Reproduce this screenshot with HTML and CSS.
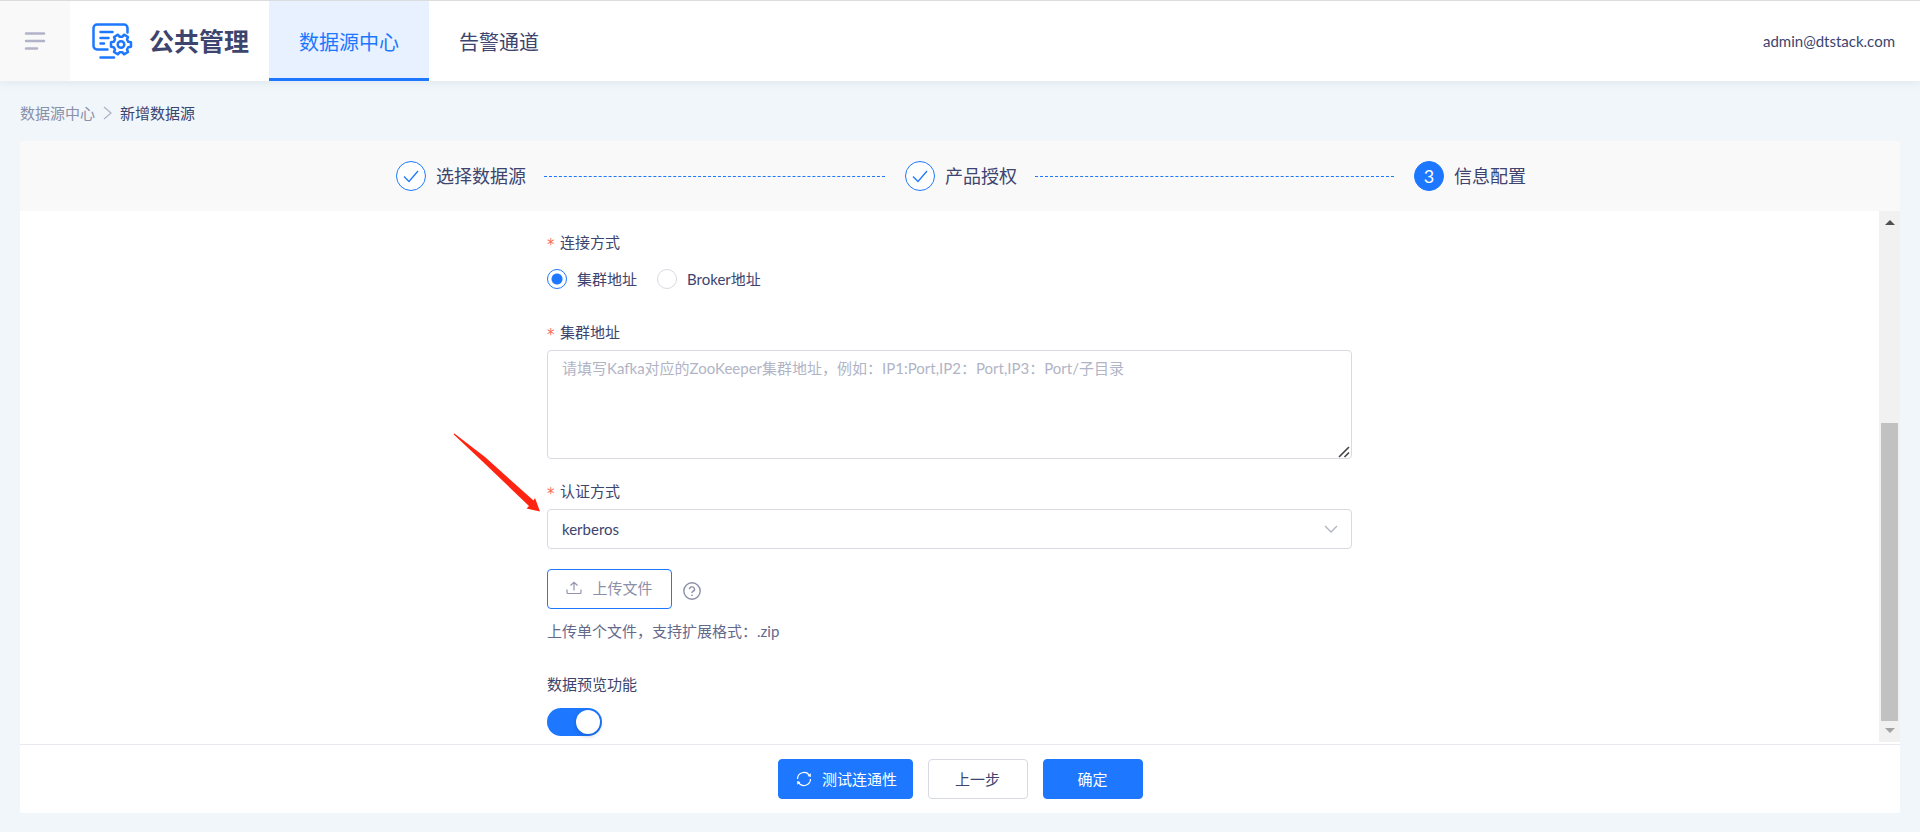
FILE: index.html
```
<!DOCTYPE html>
<html lang="zh-CN">
<head>
<meta charset="utf-8">
<title>公共管理 - 新增数据源</title>
<link rel="stylesheet" href="styles.css">
</head>
<body>
<header class="topbar">
  <button class="menu-toggle" type="button" aria-label="菜单">
    <svg width="22" height="18" viewBox="0 0 22 18" fill="none" stroke="#b1b4c9" stroke-width="2.5" stroke-linecap="round"><path d="M2 1.5h18M2 9h18M2 16.500h11"/></svg>
  </button>
  <div class="brand">
    <svg class="brand-icon" width="42" height="38" viewBox="0 0 42 38" fill="none" stroke="#1d78ff" stroke-width="2.5" stroke-linecap="round" stroke-linejoin="round">
      <path d="M36.500 10.500V6a3.500 3.500 0 0 0-3.500-3.500H6A3.500 3.500 0 0 0 2.500 6v18A3.500 3.500 0 0 0 6 27.500h10.500"/>
      <path d="M9.500 10h12M9.500 16h8M9.500 21.500h3.500M9.500 35.500h13.500"/>
      <g transform="translate(30 22.500)">
        <path d="M7.300-2.700 10-2.300v4.600L7.300 2.700 6 5l1 2.500-4 2.300-1.600-2.100h-2.800L-3 9.800l-4-2.300L-6 5-7.300 2.700-10 2.300v-4.600l2.700-.4L-6-5l-1-2.500 4-2.300 1.600 2.100h2.800L3-9.800l4 2.300L6-5z"/>
        <circle r="3.300"/>
      </g>
    </svg>
    <span class="brand-name">公共管理</span>
  </div>
  <nav class="tabs">
    <a class="tab tab-active" href="#source">数据源中心</a>
    <a class="tab" href="#alarm">告警通道</a>
  </nav>
  <span class="user">admin@dtstack.com</span>
</header>

<nav class="breadcrumb" aria-label="面包屑">
  <a class="crumb" href="#source">数据源中心</a>
  <svg width="9" height="14" viewBox="0 0 9 14" fill="none" stroke="#b1b4c5" stroke-width="1.300"><path d="M1 1l7 6-7 6"/></svg>
  <span class="crumb-current">新增数据源</span>
</nav>

<main class="panel">
  <ol class="steps">
    <li class="step">
      <span class="step-dot"><svg width="16" height="14" viewBox="0 0 16 14" fill="none" stroke="#1d78ff" stroke-width="1.300"><path d="M1 7.500l5 5L15 2"/></svg></span>
      <span class="step-title">选择数据源</span>
      <span class="step-line"></span>
    </li>
    <li class="step">
      <span class="step-dot"><svg width="16" height="14" viewBox="0 0 16 14" fill="none" stroke="#1d78ff" stroke-width="1.300"><path d="M1 7.500l5 5L15 2"/></svg></span>
      <span class="step-title">产品授权</span>
      <span class="step-line"></span>
    </li>
    <li class="step" aria-current="step">
      <span class="step-dot step-dot-current">3</span>
      <span class="step-title">信息配置</span>
    </li>
  </ol>

  <div class="content">
    <div class="scroll">
      <form class="form" id="config">
        <fieldset class="field">
          <legend class="label required">连接方式</legend>
          <div class="radios">
            <label class="radio"><input type="radio" name="mode" checked>集群地址</label>
            <label class="radio"><input type="radio" name="mode">Broker地址</label>
          </div>
        </fieldset>
        <div class="field">
          <label class="label required" for="address">集群地址</label>
          <div class="control-wrap">
            <textarea class="control textarea" id="address" placeholder="请填写Kafka对应的ZooKeeper集群地址，例如：IP1:Port,IP2：Port,IP3：Port/子目录"></textarea>
            <svg class="grip" width="12" height="12" viewBox="0 0 12 12" fill="none" stroke="#444" stroke-width="1.600"><path d="M1 11 11 1M6.500 11 11 6.500"/></svg>
          </div>
        </div>
        <div class="field field-auth">
          <label class="label required" for="auth">认证方式</label>
          <div class="control-wrap">
            <select class="control select" id="auth"><option>kerberos</option></select>
            <svg class="select-arrow" width="14" height="8" viewBox="0 0 14 8" fill="none" stroke="#b1b4c5" stroke-width="1.300"><path d="M1 1l6 6 6-6"/></svg>
          </div>
          <svg class="pointer" width="88" height="80" viewBox="0 0 88 80" fill="#ff2312"><path d="M.5 1.200 1.400.500 32 24 80.500 67.500 82 65 87 78.500 73.500 75.500 76 73 29 28z"/></svg>
        </div>
        <div class="field">
          <div class="upload-row">
            <button class="btn upload" type="button">
              <svg width="16" height="14" viewBox="0 0 16 14" fill="none" stroke="#9194ad" stroke-width="1.200"><path d="M1 8.500v3a1 1 0 0 0 1 1h12a1 1 0 0 0 1-1v-3M8 9.500V1.500M4.500 4.500 8 1.200l3.500 3.300"/></svg>
              上传文件
            </button>
            <svg class="help" width="18" height="18" viewBox="0 0 18 18" fill="none" stroke="#8b8fa8" stroke-width="1.400"><circle cx="9" cy="9" r="8.200"/><path d="M6.500 7.200a2.500 2.300 0 1 1 3.700 2c-.8.5-1.200.8-1.200 1.800M9 12.400v1.500"/></svg>
          </div>
          <p class="hint">上传单个文件，支持扩展格式：.zip</p>
        </div>
        <div class="field field-switch">
          <label class="label" for="preview">数据预览功能</label>
          <input class="switch" id="preview" type="checkbox" role="switch" checked>
        </div>
      </form>
    </div>
    <div class="scrollbar" aria-hidden="true">
      <span class="scroll-arrow scroll-up"></span>
      <span class="scroll-thumb"></span>
      <span class="scroll-arrow scroll-down"></span>
    </div>
  </div>

  <footer class="actions">
    <button class="btn btn-primary btn-test" type="button">
      <svg width="16" height="16" viewBox="0 0 16 16" fill="none" stroke="#fff" stroke-width="1.200"><path d="M1.500 8A6.500 6.500 0 0 1 13.500 4.500M14.500 8A6.500 6.500 0 0 1 2.500 11.500"/><path fill="#fff" stroke="none" d="M14.800 2.300v3.800l-3.300-1zM1.200 13.700V9.900l3.300 1z"/></svg>
      测试连通性
    </button>
    <button class="btn" type="button">上一步</button>
    <button class="btn btn-primary" type="submit" form="config">确定</button>
  </footer>
</main>
</body>
</html>
```

FILE: styles.css
```
* {
  box-sizing: border-box;
}

body {
  margin: 0;
  height: 100vh;
  padding-bottom: 19px;
  display: flex;
  flex-direction: column;
  background: #f0f6fa;
  color: #3d446e;
  font-family: Lato, "Noto Sans CJK SC", sans-serif;
  font-size: 15px;
  line-height: 24px;
}

a {
  color: inherit;
  text-decoration: none;
}

button,
select,
textarea {
  font: inherit;
  color: inherit;
}

svg {
  flex: none;
}

.topbar {
  flex: none;
  display: flex;
  height: 81px;
  border-top: 1px solid #dcdcdc;
  background: #fff;
  box-shadow: 0 2px 8px rgba(60, 90, 120, 0.08);
}

.menu-toggle {
  display: flex;
  align-items: center;
  justify-content: center;
  width: 70px;
  padding: 0;
  border: 0;
  background: #f9f9f9;
}

.brand {
  display: flex;
  align-items: center;
  gap: 16px;
  padding: 0 20px 0 21px;
}

.brand-name {
  font-size: 25px;
  font-weight: 700;
}

.tabs {
  display: flex;
}

.tab {
  display: flex;
  align-items: center;
  padding: 2px 30px 0;
  font-size: 20px;
}

.tab-active {
  background: #e8f1ff;
  box-shadow: inset 0 -3px #1d78ff;
  color: #1d78ff;
}

.user {
  margin: auto 25px auto auto;
}

.breadcrumb {
  flex: none;
  display: flex;
  align-items: center;
  gap: 8px;
  height: 60px;
  padding: 4px 20px 0;
}

.crumb {
  color: #8b8fa8;
}

.panel {
  flex: 1;
  min-height: 0;
  display: flex;
  flex-direction: column;
  margin: 0 20px;
  background: #fff;
  border-radius: 2px;
}

.steps {
  flex: none;
  display: flex;
  gap: 20px;
  height: 70px;
  margin: 0;
  padding: 0 calc(20% - 2px) 0 20%;
  list-style: none;
  background: #f9f9f9;
  font-size: 18px;
}

.step {
  flex: 1;
  display: flex;
  align-items: center;
}

.step:last-child {
  flex: none;
}

.step-dot {
  display: flex;
  align-items: center;
  justify-content: center;
  width: 30px;
  height: 30px;
  margin-right: 10px;
  border: 1px solid #1d78ff;
  border-radius: 50%;
  background: #fff;
}

.step-dot-current {
  background: #1d78ff;
  color: #fff;
}

.step-line {
  flex: 1;
  margin-left: 18px;
  border-top: 1px dashed #1d78ff;
}

.content {
  flex: 1;
  min-height: 0;
  display: flex;
  padding-bottom: 2px;
}

.scroll {
  flex: 1;
  overflow: hidden;
}

.form {
  display: flex;
  flex-direction: column;
  gap: 20px;
  max-width: 805px;
  margin: 0 auto;
  padding-top: 19px;
}

.field {
  min-width: 0;
  margin: 0;
  padding: 0;
  border: 0;
}

.label {
  display: flex;
  align-items: center;
  height: 24px;
  margin-bottom: 6px;
  padding: 0;
}

.required::before {
  content: "*";
  width: 13px;
  padding-top: 5px;
  color: #f96c5b;
  font-family: "DejaVu Sans", sans-serif;
}

.radios {
  display: flex;
  gap: 20px;
  padding: 9px 0 11px;
}

.radio {
  display: flex;
  align-items: center;
  gap: 10px;
  height: 20px;
}

.radio input {
  appearance: none;
  width: 20px;
  height: 20px;
  margin: 0;
  border: 1px solid #d8dae2;
  border-radius: 50%;
}

.radio input:checked {
  border-color: #1d78ff;
  background: radial-gradient(circle, #1d78ff 5px, #fff 6px);
}

.control {
  display: block;
  width: 100%;
  border: 1px solid #d8dae2;
  border-radius: 4px;
  background: #fff;
}

.textarea {
  height: 109px;
  padding: 5px 14px;
}

.textarea::placeholder {
  color: #b1b4c5;
}

.textarea::-webkit-resizer {
  background: transparent;
}

.field-auth,
.control-wrap {
  position: relative;
}

.grip {
  position: absolute;
  right: 2px;
  bottom: 1px;
  pointer-events: none;
}

.select {
  appearance: none;
  height: 40px;
  padding: 0 14px;
}

.select-arrow {
  position: absolute;
  top: 16px;
  right: 14px;
  pointer-events: none;
}

.pointer {
  position: absolute;
  top: -46px;
  left: -94px;
  pointer-events: none;
}

.btn {
  display: flex;
  align-items: center;
  justify-content: center;
  gap: 10px;
  width: 100px;
  height: 40px;
  padding: 0;
  border: 1px solid #d8dae2;
  border-radius: 4px;
  background: #fff;
}

.upload-row {
  display: flex;
  align-items: center;
  gap: 11px;
}

.upload {
  width: 125px;
  padding-bottom: 2px;
  border-color: #1d78ff;
  color: #8b8fa8;
}

.help {
  margin-top: 4px;
}

.hint {
  margin: 10px 0 0;
  color: #64698b;
}

.field-switch {
  padding-top: 9px;
}

.field-switch .label {
  margin-bottom: 12px;
}

.switch {
  appearance: none;
  display: flex;
  justify-content: flex-end;
  width: 55px;
  height: 28px;
  margin: 0;
  padding: 2px;
  border-radius: 14px;
  background: #1d78ff;
}

.switch::before {
  content: "";
  width: 24px;
  height: 24px;
  border-radius: 50%;
  background: #fff;
  box-shadow: 0 2px 4px rgba(0, 35, 80, 0.25);
}

.scrollbar {
  display: flex;
  flex-direction: column;
  align-items: center;
  justify-content: flex-end;
  width: 21px;
  padding: 9px 0;
  background: #f1f1f1;
}

.scroll-arrow {
  border: 5px solid transparent;
}

.scroll-up {
  margin-bottom: auto;
  border-top-width: 0;
  border-bottom-color: #505050;
}

.scroll-down {
  margin-top: 7px;
  border-bottom-width: 0;
  border-top-color: #a3a3a3;
}

.scroll-thumb {
  width: 17px;
  height: 58%;
  background: #c1c1c1;
}

.actions {
  flex: none;
  display: flex;
  justify-content: center;
  gap: 15px;
  padding: 14px 0;
  border-top: 1px solid #e8e9ee;
}

.btn-primary {
  border-color: #1d78ff;
  background: #1d78ff;
  color: #fff;
}

.btn-test {
  width: 135px;
  padding-left: 3px;
}
```
